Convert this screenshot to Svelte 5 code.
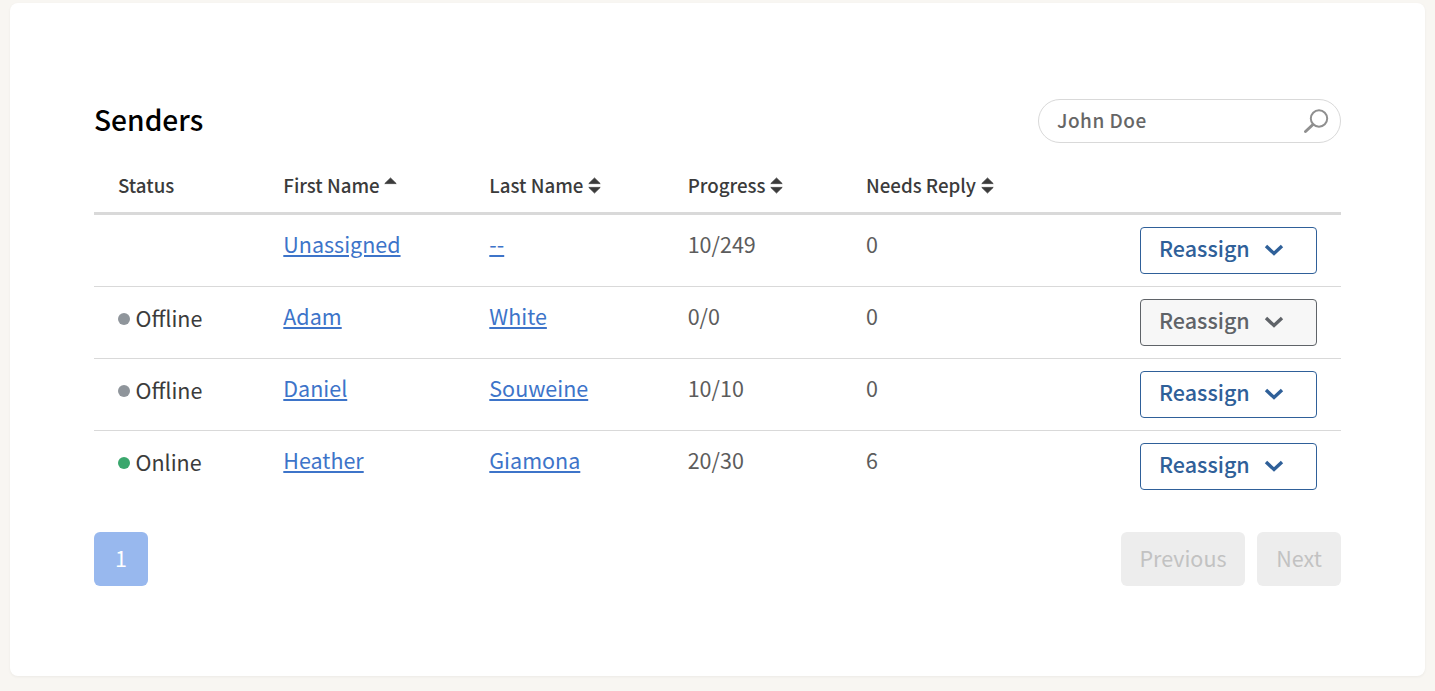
<script>
  const rows = [
    { status: '', first: 'Unassigned', last: '--', progress: '10/249', reply: '0', muted: false },
    { status: 'Offline', first: 'Adam', last: 'White', progress: '0/0', reply: '0', muted: true },
    { status: 'Offline', first: 'Daniel', last: 'Souweine', progress: '10/10', reply: '0', muted: false },
    { status: 'Online', first: 'Heather', last: 'Giamona', progress: '20/30', reply: '6', muted: false }
  ];
  const cols = [
    { label: 'First Name', sort: 'asc' },
    { label: 'Last Name', sort: 'both' },
    { label: 'Progress', sort: 'both' },
    { label: 'Needs Reply', sort: 'both' }
  ];
</script>

<main class="page">
  <section class="card">
    <header class="head">
      <h1>Senders</h1>
      <div class="search">
        <span class="query">John Doe</span>
        <svg class="glass" width="26" height="26" viewBox="0 0 26 26" fill="none" stroke="#8f8f8f">
          <circle cx="16" cy="10.5" r="8.2" stroke-width="2" />
          <path d="M10 16.5 L2.5 23.5" stroke-width="3" stroke-linecap="round" />
        </svg>
      </div>
    </header>

    <div class="table">
      <div class="row top">
        <div class="status th">Status</div>
        {#each cols as c}
          <div class="th cell">
            {c.label}
            <svg class="sort" width="13" height="17" viewBox="0 0 13 17" fill="#3b3b3b" stroke="#3b3b3b" stroke-width="0.8" stroke-linejoin="round">
              <path d="M6.5 1 L12.2 6.6 H0.8 Z" />
              {#if c.sort === 'both'}<path d="M6.5 16 L12.2 10.4 H0.8 Z" />{/if}
            </svg>
          </div>
        {/each}
        <div></div>
      </div>
      {#each rows as r}
        <div class="row">
          <div class="status st">
            {#if r.status}
              <span class="dot" class:on={r.status === 'Online'}></span>{r.status}
            {/if}
          </div>
          <div class="cell"><a href="#top">{r.first}</a></div>
          <div class="cell"><a href="#top">{r.last}</a></div>
          <div class="cell val">{r.progress}</div>
          <div class="cell val">{r.reply}</div>
          <div class="act">
            <button class="re" class:muted={r.muted}>
              <span class="lbl">Reassign</span>
              <svg width="20" height="12" viewBox="0 0 20 12" fill="none" stroke="currentColor" stroke-width="3.4">
                <path d="M2 2 L10 9.5 L18 2" />
              </svg>
            </button>
          </div>
        </div>
      {/each}
    </div>

    <footer class="pager">
      <button class="num">1</button>
      <div class="nav">
        <button class="dis prev">Previous</button>
        <button class="dis next">Next</button>
      </div>
    </footer>
  </section>
</main>

<style>
  :global(body) {
    margin: 0;
    background: #f8f6f2;
  }
  .page {
    height: 691px;
    padding: 3px 10px 15px;
    box-sizing: border-box;
    font-family: "Noto Sans CJK SC", "Noto Sans", sans-serif;
    color: #3b3b3b;
  }
  .card {
    height: 673px;
    box-sizing: border-box;
    background: #fff;
    border-radius: 8px;
    box-shadow: 0 1px 3px rgba(0, 0, 0, 0.05);
    padding: 96px 84px 0;
  }
  .head {
    display: flex;
    justify-content: space-between;
    align-items: center;
    height: 44px;
  }
  h1 {
    margin: 0 0 4px;
    font-size: 28.16px;
    line-height: 40px;
    font-weight: 500;
    color: #000;
  }
  .search {
    width: 303px;
    height: 44px;
    box-sizing: border-box;
    border: 1px solid #d9d9d9;
    border-radius: 22px;
    display: flex;
    align-items: center;
    justify-content: space-between;
    padding: 0 11px 0 18px;
  }
  .query {
    font-size: 19px;
    font-weight: 500;
    letter-spacing: 0.5px;
    line-height: 26px;
    margin-bottom: 2px;
    color: #666666;
  }
  .row {
    display: grid;
    grid-template-columns: 189.3px 206px 198.4px 178.3px 1fr auto;
    height: 72px;
    border-bottom: 1px solid #d9d9d9;
    box-sizing: border-box;
    align-items: center;
  }
  .row:last-child {
    border-bottom-color: transparent;
  }
  .row.top {
    height: 52px;
    margin-top: 20px;
    border-bottom: 3px solid #d9d9d9;
    padding-bottom: 5px;
  }
  .status {
    padding-left: 24px;
  }
  .th {
    font-size: 18.72px;
    font-weight: 500;
    line-height: 28px;
    color: #3b3b3b;
  }
  .sort {
    margin-left: 0.5px;
    vertical-align: -1px;
  }
  .st {
    font-size: 21.5px;
    display: flex;
    align-items: center;
    height: 30px;
    margin-bottom: 10px;
    line-height: 30px;
  }
  .dot {
    width: 12px;
    height: 12px;
    border-radius: 50%;
    background: #8f959b;
    margin-right: 5.5px;
    margin-top: 2px;
  }
  .dot.on {
    background: #3aa76d;
  }
  .cell {
    font-size: 21.5px;
    line-height: 30px;
    margin-bottom: 14px;
  }
  .th.cell {
    font-size: 18.72px;
    line-height: 28px;
    margin: 0;
  }
  .cell a {
    color: #3d74c9;
    text-decoration: underline;
  }
  .val {
    color: #5c5c5c;
  }
  .act {
    display: flex;
    justify-content: flex-end;
    padding-right: 24px;
  }
  button {
    font-family: inherit;
    box-sizing: border-box;
  }
  .re {
    width: 177px;
    height: 47px;
    background: #fff;
    border: 1px solid #2f6099;
    border-radius: 4px;
    color: #2f6099;
    font-size: 21.5px;
    font-weight: 500;
    display: flex;
    align-items: center;
    gap: 14px;
    padding: 0 0 0 18px;
  }
  .lbl {
    line-height: 28px;
    margin-bottom: 5px;
  }
  .re svg {
    margin-bottom: 2px;
  }
  .re.muted {
    background: #f7f7f7;
    border-color: #5f6368;
    color: #5f6368;
  }
  .pager {
    display: flex;
    justify-content: space-between;
    margin-top: 29px;
  }
  .num, .dis {
    height: 54px;
    border: 0;
    border-radius: 6px;
    font-size: 21.5px;
    padding: 0 0 4px;
  }
  .num {
    width: 54px;
    background: #98b8ee;
    color: #fff;
  }
  .nav {
    display: flex;
    gap: 12px;
  }
  .dis {
    background: #ededed;
    color: #c2c2c2;
  }
  .prev {
    width: 124px;
  }
  .next {
    width: 84px;
  }
</style>
